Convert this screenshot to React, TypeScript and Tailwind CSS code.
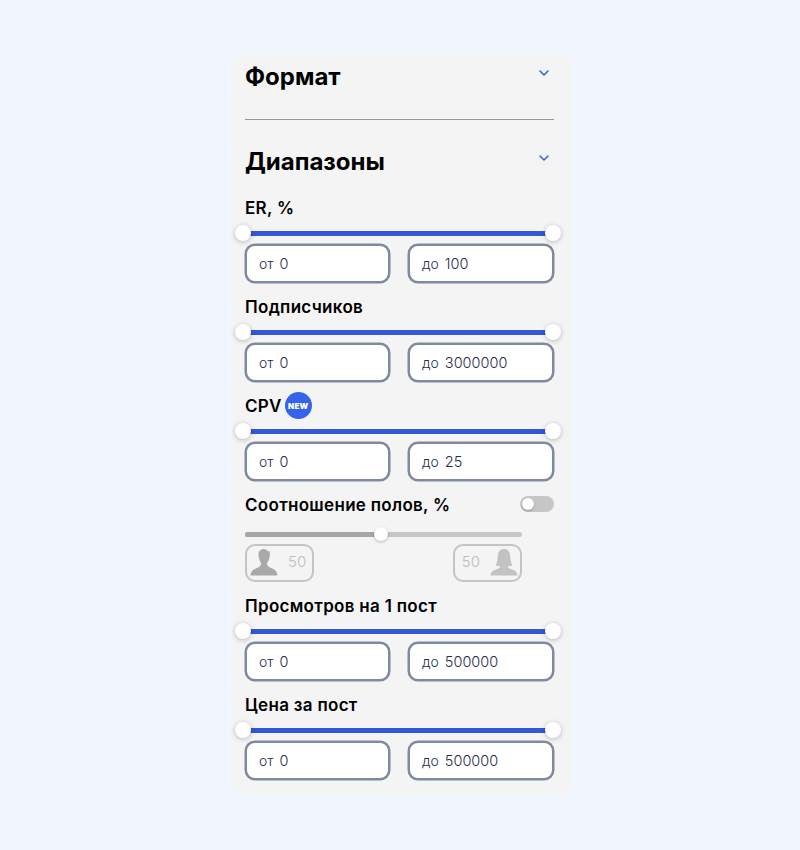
import React from "react";

function Chevron({ top }: { top: string }) {
  return (
    <svg className={`absolute right-[4px] ${top}`} width="12" height="8" viewBox="0 0 12 8" fill="none" stroke="#3f5fe0" strokeWidth="1.6" strokeLinecap="round" strokeLinejoin="round">
      <path d="M2 2 L6 6 L10 2" />
    </svg>
  );
}

function Slider() {
  return (
    <div className="relative h-[5px] bg-[#3457d5]">
      <span className="absolute left-[-10px] top-[-6px] w-[16px] h-[16px] rounded-full bg-white shadow-[0_1px_5px_rgba(0,0,0,0.25)]" />
      <span className="absolute right-[-7px] top-[-6px] w-[16px] h-[16px] rounded-full bg-white shadow-[0_1px_5px_rgba(0,0,0,0.25)]" />
    </div>
  );
}

function Field({ prefix, value, wide }: { prefix: string; value: string; wide?: boolean }) {
  return (
    <div className={`flex h-[39px] ${wide ? "w-[146px]" : "w-[145px]"} items-center gap-[6px] rounded-[10px] border-2 border-[#7e8a9f] bg-white pl-[12px] text-[14px] font-light text-[#1f2d4a] shadow-[0_0_0_0.5px_#7e8a9f]`}>
      <span>{prefix}</span>
      <span className="text-[14.5px]">{value}</span>
    </div>
  );
}

function Range({ label, to, badge }: { label: string; to: string; badge?: boolean }) {
  return (
    <div className="h-[99px] pt-[5px]">
      <div className="flex h-[26px] items-center gap-[3px] text-[17px] font-semibold tracking-[0.3px] text-black">
        <span>{label}</span>
        {badge && (
          <span className="mb-[3px] flex h-[27px] w-[27px] shrink-0 items-center justify-center rounded-full bg-[#3563e9] text-[8px] font-black tracking-[0.2px] text-white">NEW</span>
        )}
      </div>
      <div className="h-[9px]" />
      <Slider />
      <div className="mt-[8px] flex justify-between">
        <Field prefix="от" value="0" />
        <Field prefix="до" value={to} wide />
      </div>
    </div>
  );
}

function Male() {
  return (
    <svg width="28" height="28" viewBox="0 0 28 28" fill="#a9a9a9">
      <path d="M14 1 C9.5 1 8 4.5 8.6 8 C9 11 10 13 11 15 C11 17.5 10 18.5 7 20 C3.5 21.5 1 22.5 0.5 27.5 L27.5 27.5 C27 22.5 24.5 21.5 21 20 C18 18.5 17 17.5 17 15 C18.5 13 19.5 10.5 19.7 7.5 C20 5.5 20 4 19 3 L17.5 3.2 C17 2 15.5 1 14 1 Z" />
    </svg>
  );
}

function Female() {
  return (
    <svg width="28" height="28" viewBox="0 0 28 28" fill="#c2c2c2">
      <path d="M14 1 C9.5 1 8 4.5 7.8 8 C7.6 12 7 15 5.5 17.5 L10.5 18.5 C10 20 8.5 20.5 6 21.5 C3 22.5 1 23.5 0.5 27.5 L27.5 27.5 C27 23.5 25 22.5 22 21.5 C19.5 20.5 18 20 17.5 18.5 L22.5 17.5 C21 15 20.4 12 20.2 8 C20 4.5 18.5 1 14 1 Z" />
    </svg>
  );
}

export default function App() {
  return (
    <div className="min-h-[850px] bg-[#f1f5fe] pt-[54px] font-['Inter',sans-serif]">
      <div className="ml-[232px] h-[742px] w-[340px] rounded-[14px] bg-[#f4f4f4] pl-[13px] pr-[18px]">
        <div className="relative flex h-[65px] items-start pt-[7px]">
          <h2 className="text-[24px] leading-[32px] font-bold text-black">Формат</h2>
          <Chevron top="top-[15px]" />
        </div>
        <div className="h-px bg-[#8f96a3]" />
        <div className="relative h-[71px] pt-[26px]">
          <h2 className="text-[24px] leading-[32px] font-bold text-black">Диапазоны</h2>
          <Chevron top="top-[34px]" />
        </div>
        <Range label="ER, %" to="100" />
        <Range label="Подписчиков" to="3000000" />
        <Range label="CPV" to="25" badge />
        <div className="h-[101px] pt-[5px]">
          <div className="flex h-[26px] items-center justify-between">
            <span className="text-[17px] font-semibold tracking-[0.3px] text-black">Соотношение полов, %</span>
            <span className="relative mt-[3px] h-[16px] w-[34px] self-start rounded-full bg-[#c6c6c6]">
              <span className="absolute left-[2px] top-[2px] h-[12px] w-[12px] rounded-full bg-white shadow-[0_1px_2px_rgba(0,0,0,0.3)]" />
            </span>
          </div>
          <div className="relative mt-[13px] h-[5px] w-[277px] rounded-full bg-[#c6c6c6]">
            <div className="h-[5px] w-[136px] rounded-l-full bg-[#a6a6a6]" />
            <span className="absolute left-[129px] top-[-5px] h-[14px] w-[14px] rounded-full bg-white shadow-[0_1px_3px_rgba(0,0,0,0.25)]" />
          </div>
          <div className="mt-[7px] flex w-[277px] justify-between">
            <div className="flex h-[38px] w-[69px] items-end gap-[10px] rounded-[10px] border-2 border-[#c4c4c4] pb-[4px] pl-[3px] text-[15px] font-light text-[#bdbdbd]">
              <Male />
              <span className="mb-[5px] leading-[18px]">50</span>
            </div>
            <div className="flex h-[38px] w-[69px] items-end justify-end gap-[10px] rounded-[10px] border-2 border-[#c4c4c4] pb-[4px] pr-[2px] text-[15px] font-light text-[#bdbdbd]">
              <span className="mb-[5px] leading-[18px]">50</span>
              <Female />
            </div>
          </div>
        </div>
        <Range label="Просмотров на 1 пост" to="500000" />
        <Range label="Цена за пост" to="500000" />
      </div>
    </div>
  );
}
